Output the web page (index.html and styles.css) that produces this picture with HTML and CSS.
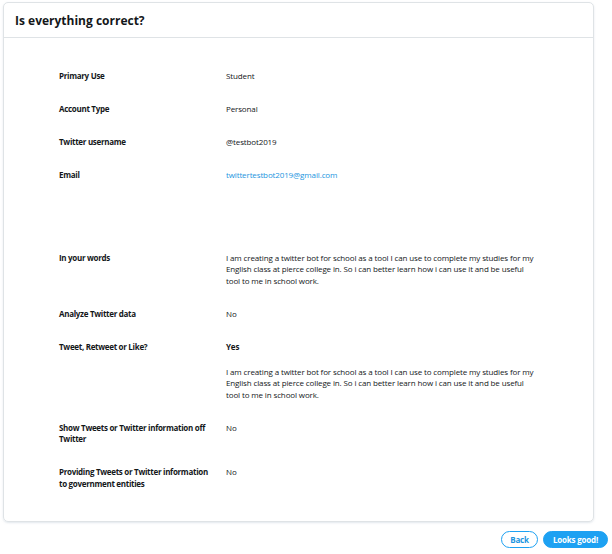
FILE: index.html
```html
<!DOCTYPE html>
<html>
<head>
<meta charset="utf-8">
<link rel="stylesheet" href="styles.css">
</head>
<body>
<div class="page">
  <div class="card">
    <div class="card-header"><h1 class="title">Is everything correct?</h1></div>
    <div class="card-body">
      <div class="row"><div class="label">Primary Use</div><div class="value">Student</div></div>
      <div class="row"><div class="label">Account Type</div><div class="value">Personal</div></div>
      <div class="row"><div class="label">Twitter username</div><div class="value">@testbot2019</div></div>
      <div class="row"><div class="label">Email</div><div class="value"><a class="link" href="#">twittertestbot2019@gmail.com</a></div></div>
      <div class="spacer"></div>
      <div class="row"><div class="label">In your words</div><div class="value">I am creating a twitter bot for school as a tool I can use to complete my studies for my English class at pierce college in. So i can better learn how i can use it and be useful tool to me in school work.</div></div>
      <div class="row"><div class="label">Analyze Twitter data</div><div class="value">No</div></div>
      <div class="row"><div class="label">Tweet, Retweet or Like?</div><div class="value"><div class="strong">Yes</div><p class="detail">I am creating a twitter bot for school as a tool I can use to complete my studies for my English class at pierce college in. So i can better learn how i can use it and be useful tool to me in school work.</p></div></div>
      <div class="row"><div class="label">Show Tweets or Twitter information off Twitter</div><div class="value">No</div></div>
      <div class="row"><div class="label">Providing Tweets or Twitter information to government entities</div><div class="value">No</div></div>
    </div>
  </div>
  <div class="actions">
    <button class="btn btn-outline">Back</button>
    <button class="btn btn-primary">Looks good!</button>
  </div>
</div>
</body>
</html>
```
FILE: styles.css
```css
* { box-sizing: border-box; }
html, body { margin: 0; padding: 0; background: #fff; }
body {
  font-family: "Open Sans", "Noto Sans", sans-serif;
  color: #14171a;
  font-size: 8px;
  line-height: 11.5px;
  letter-spacing: -0.13px;
}
.page { padding: 2px 4px 0 3px; width: 612px; }
.card {
  width: 591px;
  border: 1px solid #dfe3e6;
  border-radius: 5px;
  box-shadow: 0 1px 2px rgba(200, 210, 220, 0.5);
}
.card-header {
  height: 35px;
  border-bottom: 1px solid #dfe3e6;
  display: flex;
  align-items: center;
  padding: 1px 11px 0;
}
.title {
  margin: 0;
  font-size: 12px;
  font-weight: 700;
  line-height: 16px;
  letter-spacing: 0;
  color: #14171a;
}
.card-body {
  padding: 32px 0 32px 55px;
  display: flex;
  flex-direction: column;
  gap: 21.5px;
}
.row { display: flex; gap: 17px; }
.label { width: 150px; font-weight: 700; letter-spacing: -0.3px; }
.value { width: 312px; }
.spacer { height: 28px; }
.link { color: #1b95e0; text-decoration: none; }
.strong { font-weight: 700; }
.detail { margin: 13.5px 0 0; }
.actions {
  display: flex;
  justify-content: flex-end;
  gap: 5px;
  margin-top: 9px;
}
.btn {
  font-family: inherit;
  font-size: 8px;
  font-weight: 700;
  letter-spacing: -0.2px;
  height: 17px;
  line-height: 15px;
  border-radius: 9px;
  cursor: pointer;
  padding: 0;
}
.btn-outline { background: #fff; color: #1b95e0; border: 1px solid #1da1f2; width: 37px; }
.btn-primary { background: #1da1f2; color: #fff; border: 1px solid #1da1f2; width: 65px; }
```
